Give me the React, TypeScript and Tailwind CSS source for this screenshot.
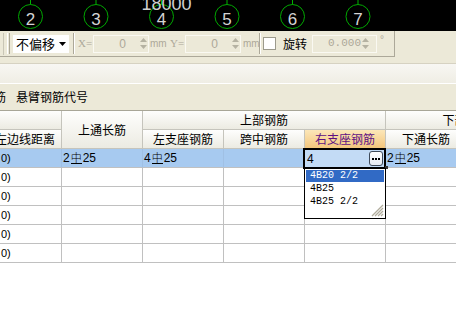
import React from 'react';

const cjk = "font-['Noto_Sans_CJK_SC','Liberation_Sans',sans-serif]";
const sans = "font-['Liberation_Sans','Noto_Sans_CJK_SC',sans-serif]";

const axes = [
  { n: '2', x: 30.5 },
  { n: '3', x: 96 },
  { n: '4', x: 161.5 },
  { n: '5', x: 227 },
  { n: '6', x: 292.5 },
  { n: '7', x: 358 },
];

const AxisStrip = () => (
  <svg width="456" height="31" className="block bg-black">
    {axes.map((a) => (
      <g key={a.n}>
        <line x1={a.x} y1={0} x2={a.x} y2={4.5} stroke="#00b400" strokeWidth={1} />
        <circle cx={a.x} cy={16.5} r={12} fill="none" stroke="#00a800" strokeWidth={1} />
        <text x={a.x} y={25} textAnchor="middle" fontSize={17} fill="#d4d4d4" fontFamily="Liberation Sans, sans-serif">
          {a.n}
        </text>
      </g>
    ))}
    <text x={166.5} y={10} textAnchor="middle" fontSize={18} fill="#cfcfcf" fontFamily="Liberation Sans, sans-serif">
      18000
    </text>
  </svg>
);

const Spin = () => (
  <div className="flex flex-col items-center justify-center gap-[3px] w-[9px] h-full shrink-0">
    <svg width="7" height="4"><path d="M0 4 L3.5 0 L7 4Z" fill="#b5b2a2" /></svg>
    <svg width="7" height="4"><path d="M0 0 L3.5 4 L7 0Z" fill="#b5b2a2" /></svg>
  </div>
);

const Sep = ({ className }: { className: string }) => (
  <div className={`shrink-0 w-[2px] h-[21px] border-l border-l-[#aca899] border-r border-r-white ${className}`} />
);

const Toolbar = () => (
  <div className="h-[26px] bg-[#ece9d8] flex">
    <div className="w-[395px] h-full border-r border-r-[#aca899] border-b border-b-[#aca899] flex items-center text-[#aca899]">
      <div className="shrink-0 ml-[3px] w-px h-[22px] bg-[#c9c6b6]" />
      <div className="shrink-0 ml-[3px] w-[3px] h-[21px] border-l border-l-white border-r border-r-[#aca899]" />
      <div className="shrink-0 ml-[3px] w-[56px] h-[18px] bg-white flex items-center">
        <span className={`${cjk} text-[13px] leading-none text-black ml-[3px]`}>不偏移</span>
        <svg width="7" height="4" className="ml-auto mr-[3px]"><path d="M0 0 L7 0 L3.5 4Z" fill="#000" /></svg>
      </div>
      <Sep className="ml-[4px]" />
      <span className="shrink-0 ml-[3px] w-[13px] font-['Liberation_Serif',serif] text-[11px] leading-none">X=</span>
      <div className="shrink-0 ml-[2px] w-[56px] h-[18px] border border-[#faf9f2] flex items-center">
        <span className={`${sans} text-[12px] leading-none ml-auto mr-[13px]`}>0</span>
        <Spin />
      </div>
      <span className={`shrink-0 ml-[1px] w-[13px] ${sans} text-[10px] leading-none`}>mm</span>
      <span className="shrink-0 ml-[7px] w-[13px] font-['Liberation_Serif',serif] text-[11px] leading-none">Y=</span>
      <div className="shrink-0 ml-[2px] w-[56px] h-[18px] border border-[#faf9f2] flex items-center">
        <span className={`${sans} text-[12px] leading-none ml-auto mr-[13px]`}>0</span>
        <Spin />
      </div>
      <span className={`shrink-0 ml-[2px] w-[13px] ${sans} text-[10px] leading-none`}>mm</span>
      <Sep className="ml-[3px]" />
      <div className="shrink-0 ml-[2px] w-[13px] h-[13px] bg-white border border-[#9c9a8c]" />
      <span className={`shrink-0 ml-[7px] ${cjk} text-[12px] leading-none text-black`}>旋转</span>
      <div className="shrink-0 ml-[5px] w-[65px] h-[18px] border border-[#faf9f2] flex items-center">
        <span className="font-['Liberation_Mono',monospace] text-[11px] leading-none ml-[15px]">0.000</span>
        <Spin />
      </div>
      <span className={`shrink-0 ml-[3px] self-start mt-[4px] ${sans} text-[10px] leading-none`}>°</span>
    </div>
  </div>
);

const hCell = `flex items-center justify-center border-r border-b border-[#c5c4bc] bg-linear-to-b from-[#fefefd] to-[#ecebe2] ${cjk} text-[12px] leading-none text-black whitespace-nowrap overflow-hidden`;

const Header = () => (
  <div className="border-t border-t-[#a8a697]">
    <div className="grid grid-cols-[62px_81px_81px_81px_81px_81px_81px] grid-rows-[19px_19px]">
      <div className={hCell} />
      <div className={`${hCell} row-span-2`}>上通长筋</div>
      <div className={`${hCell} col-span-3`}>上部钢筋</div>
      <div className={`${hCell} col-span-2`}>下部钢筋</div>
      <div className={`${hCell} justify-end pr-[6px]`}>左边线距离</div>
      <div className={hCell}>左支座钢筋</div>
      <div className={hCell}>跨中钢筋</div>
      <div className="flex items-center justify-center border-r border-b border-[#c5c4bc] bg-linear-to-b from-[#fce7b9] to-[#f3c67c] font-['Noto_Sans_CJK_SC',sans-serif] text-[12px] leading-none text-[#5e1283] whitespace-nowrap">
        右支座钢筋
      </div>
      <div className={hCell}>下通长筋</div>
      <div className={hCell} />
    </div>
  </div>
);

const Bar = ({ n, d }: { n: string; d: string }) => (
  <span className={`${sans} text-[12px] leading-none text-black flex items-end`}>
    {n}
    <span className={`${cjk} font-light text-[11px] leading-none inline-block border-b border-black mx-[1px]`}>中</span>
    {d}
  </span>
);

const rows = [0, 1, 2, 3, 4, 5];

const Body = () => (
  <div className="relative">
    {rows.map((r) => (
      <div
        key={r}
        className={`grid grid-cols-[62px_81px_81px_81px_81px_81px_81px] h-[19px] ${r === 0 ? 'bg-[#a7caf0]' : 'bg-white'}`}
      >
        {[0, 1, 2, 3, 4, 5, 6].map((c) => (
          <div
            key={c}
            className={`flex items-center border-r border-b ${r === 0 ? 'border-[#a0c0e4]' : 'border-[#c0c0c0]'} border-b-[#c0c0c0] overflow-hidden whitespace-nowrap pl-[1px]`}
          >
            {c === 0 && <span className={`${sans} text-[11px] leading-none text-black`}>0)</span>}
            {r === 0 && c === 1 && <Bar n="2" d="25" />}
            {r === 0 && c === 2 && <Bar n="4" d="25" />}
            {r === 0 && c === 5 && <Bar n="2" d="25" />}
          </div>
        ))}
      </div>
    ))}

    {/* active cell editor */}
    <div className="absolute left-[303px] top-[-1px] w-[83px] h-[21px] border-2 border-black bg-[#c3dbf5] flex items-center">
      <span className={`${sans} text-[12px] leading-none text-black ml-[2px]`}>4</span>
      <div className="ml-auto mr-[1px] w-[14px] h-[15px] rounded-[3px] border border-[#3e4a5a] bg-linear-to-b from-white to-[#e6ebf2] flex items-center justify-center gap-[1px]">
        <span className="w-[2px] h-[2px] bg-black" />
        <span className="w-[2px] h-[2px] bg-black" />
        <span className="w-[2px] h-[2px] bg-black" />
      </div>
    </div>
    <div className="absolute left-[385px] top-[17px] w-[3px] h-[3px] bg-[#333]" />

    {/* dropdown list */}
    <div className="absolute left-[304px] top-[19px] w-[82px] h-[51px] border border-black bg-white pt-[1px] px-[1px] font-['Liberation_Mono',monospace] text-[10px] leading-none">
      <div className="h-[12px] bg-[#316ac5] text-white flex items-center pl-[4px] mb-[1px]">4B20 2/2</div>
      <div className="h-[12px] text-black flex items-center pl-[4px] mb-[1px]">4B25</div>
      <div className="h-[12px] text-black flex items-center pl-[4px]">4B25 2/2</div>
      <svg width="13" height="13" className="absolute right-[1px] bottom-[1px]">
        <path d="M12 1 L1 12 M12 4 L4 12 M12 7 L7 12 M12 10 L10 12" stroke="#b0ac9c" strokeWidth={1.3} />
      </svg>
    </div>
  </div>
);

export default function App() {
  return (
    <div className="w-[456px] h-[317px] overflow-hidden bg-white">
      <AxisStrip />
      <Toolbar />
      <div className="h-[6px] bg-[#ece9d8]" />
      <div className="h-[21px] border-t border-t-[#d6d2c2] border-b border-b-white bg-linear-to-b from-[#f8f7f3] to-[#efede4]" />
      <div className="h-[26px] bg-[#ece9d8] flex items-center">
        <span className={`${cjk} text-[12px] leading-none text-black ml-[-6px]`}>筋</span>
        <span className={`${cjk} text-[12px] leading-none text-black ml-[10px]`}>悬臂钢筋代号</span>
      </div>
      <Header />
      <Body />
    </div>
  );
}
